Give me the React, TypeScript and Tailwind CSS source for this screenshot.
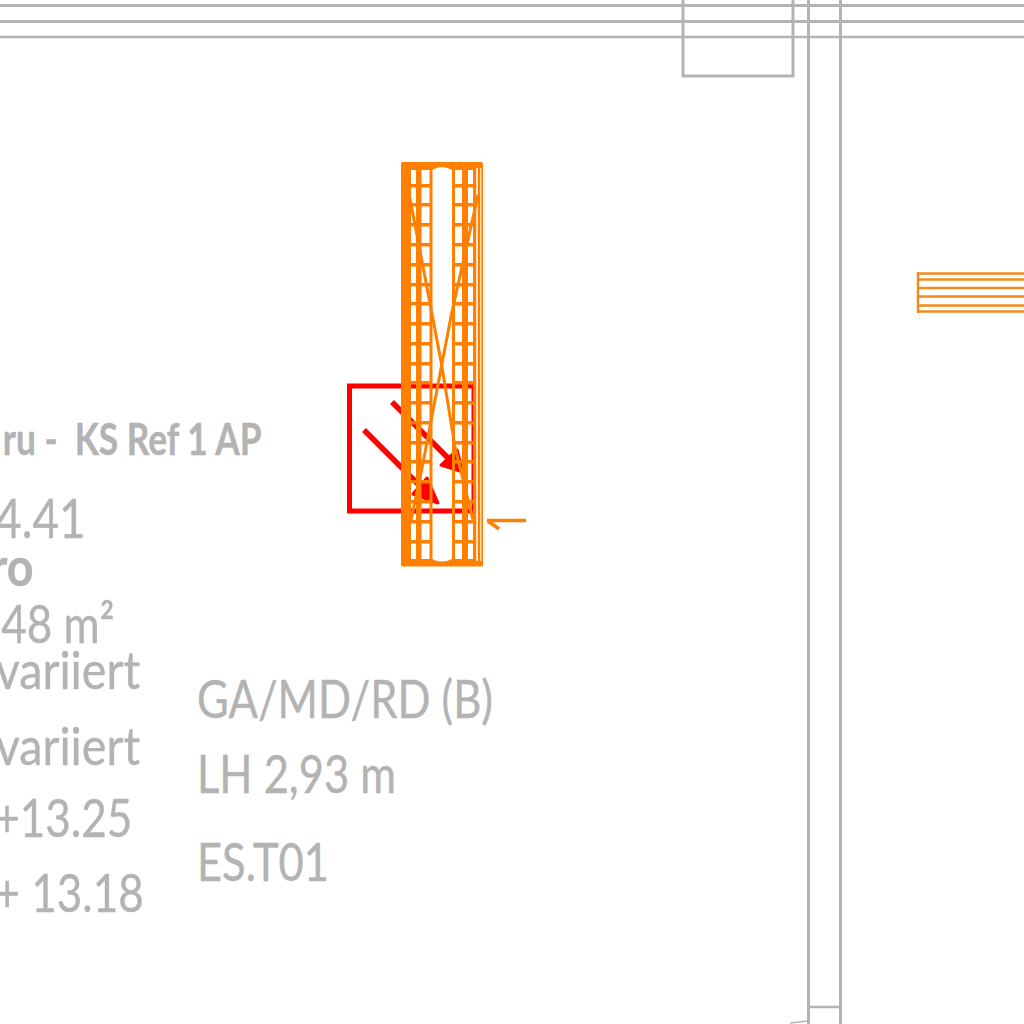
const rungs = [186, 205, 225, 245, 265, 285, 304, 324, 344, 364, 383, 403, 423, 443, 462, 482, 502, 522, 542];

function PlanLines() {
  return (
    <svg className="absolute inset-0" width="1024" height="1024" viewBox="0 0 1024 1024" fill="none">
      {/* walls */}
      <g stroke="#b3b3b3">
        <path d="M0 5.5H1024M0 21.5H1024" strokeWidth="3" />
        <path d="M0 37H1024" strokeWidth="2.5" />
        <path d="M683 0V76H793V0" strokeWidth="3" />
        <path d="M808.5 0V1024M840.5 0V1024" strokeWidth="3" />
        <path d="M808 1007H840" strokeWidth="2.5" />
        <path d="M790 1023L808 1021" strokeWidth="1.5" />
      </g>

      {/* red box with arrows, sits under the column */}
      <g stroke="#ff0000">
        <path d="M349.5 386H474V511H349.5Z" strokeWidth="5" />
        <path d="M392 402L450 460M364 430L420 486" strokeWidth="5.5" />
      </g>
      <path d="M441 465L457 450L463 472ZM413 494L427 478L438 503Z" fill="#ff0000" stroke="#ff0000" strokeWidth="3" strokeLinejoin="round" />

      {/* column */}
      <g fill="#ff8000">
        <path d="M401 163.5Q401 162 403 162H481Q483 162 483 163.5V565Q483 566.5 481 566.5H403Q401 566.5 401 565ZM411 170V559H432Q442 564 452 559H473V170H452Q442 164 432 170Z" fillRule="evenodd" />
        {rungs.map((y) => (
          <g key={y}>
            <rect x="411" y={y - 2} width="21" height="3.5" />
            <rect x="452" y={y - 2} width="25" height="3.5" />
          </g>
        ))}
        <rect x="416" y="165" width="5.5" height="398" />
        <rect x="429.5" y="165" width="3" height="398" />
        <rect x="452" y="165" width="3" height="398" />
        <rect x="462" y="165" width="6" height="398" />
        <rect x="473" y="165" width="3" height="398" />
      </g>
      <path d="M477 168V561" stroke="#ffffff" strokeWidth="1.5" />
      <path d="M479 168V561" stroke="#ff8000" strokeWidth="1.5" />
      <path d="M480.8 168V561" stroke="#ffffff" strokeWidth="1" />
      <path
        d="M408 188L441.7 365L455 447L473 520M478 195L451.7 313L441.7 365L421.7 470L411 520"
        stroke="#ff8000"
        strokeWidth="3"
      />

      {/* level mark */}
      <path d="M487 520.5H526M488 521L499 529" stroke="#ff8000" strokeWidth="3.5" />

      {/* stair at the right */}
      <path
        d="M918 272V313M918 273.5H1024M918 279.5H1024M918 288H1024M918 296.5H1024M918 305.5H1024M918 311.5H1024"
        stroke="#f28a1c"
        strokeWidth="2.5"
      />
    </svg>
  );
}

export default function App() {
  return (
    <div className="relative h-[1024px] w-[1024px] overflow-hidden bg-white font-['Lato','Liberation_Sans',sans-serif] leading-none text-[#b3b3b3] [-webkit-text-stroke:0.4px_#b3b3b3]">
      <PlanLines />

      <span className="absolute right-[762px] top-[417px] origin-right scale-x-[0.82] whitespace-pre text-[43px] font-bold">ru -  KS Ref 1 AP</span>
      <span className="absolute right-[938px] top-[491px] origin-right scale-x-[0.85] text-[54px]">4.41</span>
      <span className="absolute right-[991px] top-[539px] origin-right scale-x-[0.88] text-[53px] font-bold">ro</span>
      <span className="absolute right-[910px] top-[596px] origin-right scale-x-[0.83] whitespace-pre text-[53px]">48 m²</span>
      <span className="absolute right-[884px] top-[642px] origin-right scale-x-[0.88] text-[53px]">variiert</span>
      <span className="absolute right-[884px] top-[718px] origin-right scale-x-[0.88] text-[53px]">variiert</span>
      <span className="absolute right-[892px] top-[790px] origin-right scale-x-[0.83] text-[53px]">+13.25</span>
      <span className="absolute right-[880px] top-[865px] origin-right scale-x-[0.83] whitespace-pre text-[53px]">+ 13.18</span>

      <span className="absolute left-[197px] top-[672px] origin-left scale-x-[0.836] whitespace-pre text-[52px]">GA/MD/RD (B)</span>
      <span className="absolute left-[197px] top-[747px] origin-left scale-x-[0.836] whitespace-pre text-[52px]">LH 2,93 m</span>
      <span className="absolute left-[197px] top-[835px] origin-left scale-x-[0.836] text-[52px]">ES.T01</span>
    </div>
  );
}
